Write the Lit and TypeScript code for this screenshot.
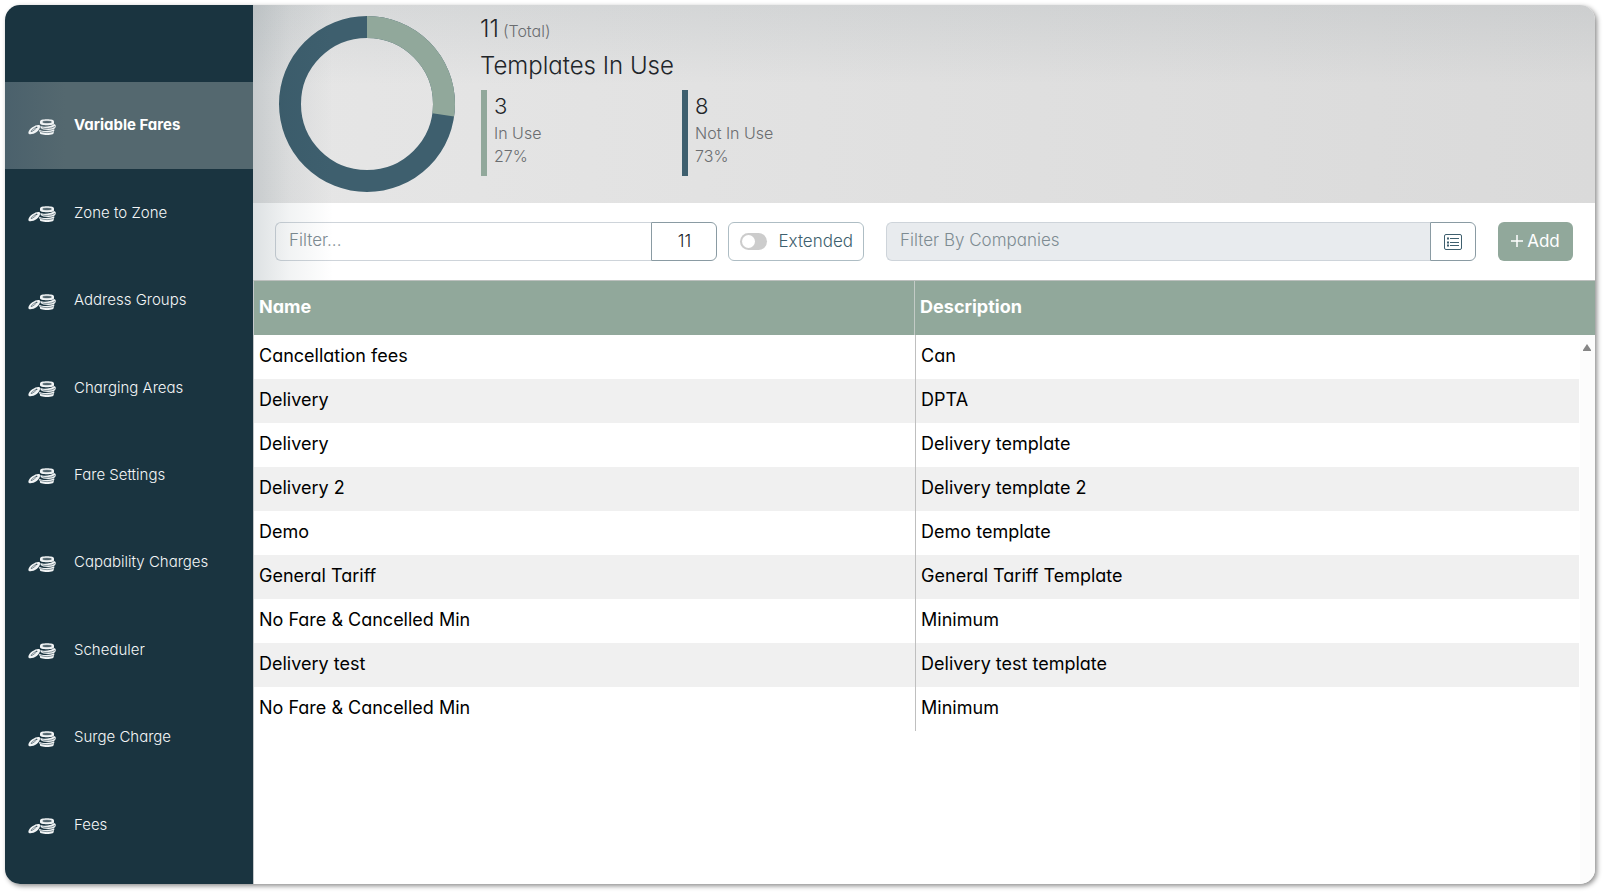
import { LitElement, html, css, svg } from "lit";
import { customElement, property, state } from "lit/decorators.js";
import { classMap } from "lit/directives/class-map.js";

const coinsIcon = html`
  <svg width="28" height="20" viewBox="0 0 84 60" aria-hidden="true" fill="none">
    <g fill="#f1f4f5">
      <path d="M36 14c0-5 8-7 21-7s21 2 21 7v5c0 4-8 6-21 6s-21-2-21-6z" />
      <path d="M37 27c7 3 31 4 41-6 5 1 6 5 5 9-1 6-9 9-22 9-12 0-20-2-23-6z" />
      <path d="M34 38c6 5 32 6 44-1 2 2 1 6-1 8 1 3 0 5-3 7-9 3-25 3-34 0-4-1-5-3-4-6-2-2-3-5-2-8z" />
      <path d="M2 50c-3-3 2-13 11-19 9-7 19-9 22-6 4 4-1 14-9 20-9 6-20 9-24 5z" />
    </g>
    <g stroke="#1a3440" stroke-width="1.500" stroke-linecap="round">
      <ellipse cx="57" cy="15" rx="13" ry="3" fill="#5d7078" stroke-width="1" />
      <path d="M44 33c9 3 26 2 36-4M38 44c10 4 29 4 37 0" />
      <ellipse cx="18" cy="37" rx="11" ry="2" transform="rotate(-37 18 37)" />
    </g>
  </svg>
`;

const listIcon = html`
  <svg width="20" height="18" viewBox="0 0 20 18" fill="none" stroke="#3e5f6e" aria-hidden="true">
    <rect x="1.500" y="1.500" width="17" height="15" rx="1.500" />
    <path d="M7 5.500h9M7 9.500h9M7 12.500h9" />
    <path d="M4 5.500h2M4 9.500h2M4 12.500h2" stroke-width="2" />
  </svg>
`;

const plusIcon = html`
  <svg width="12" height="14" viewBox="0 0 12 14" fill="none" stroke="#fff" stroke-width="1.500" aria-hidden="true">
    <path d="M6 1v12M0 7h12" />
  </svg>
`;

const menu = [
  "Variable Fares",
  "Zone to Zone",
  "Address Groups",
  "Charging Areas",
  "Fare Settings",
  "Capability Charges",
  "Scheduler",
  "Surge Charge",
  "Fees",
];

const templates = [
  { name: "Cancellation fees", description: "Can" },
  { name: "Delivery", description: "DPTA" },
  { name: "Delivery", description: "Delivery template" },
  { name: "Delivery 2", description: "Delivery template 2" },
  { name: "Demo", description: "Demo template" },
  { name: "General Tariff", description: "General Tariff Template" },
  { name: "No Fare & Cancelled Min", description: "Minimum" },
  { name: "Delivery test", description: "Delivery test template" },
  { name: "No Fare & Cancelled Min", description: "Minimum" },
];

@customElement("side-menu")
class SideMenu extends LitElement {
  @state() private active = 0;

  static styles = css`
    :host {
      display: flex;
      flex: 0 0 248px;
      background: #1a3440;
    }
    .menu {
      display: flex;
      flex: 1;
      flex-direction: column;
      padding: 77px 0 15px;
    }
    .item {
      display: flex;
      flex: 1;
      align-items: center;
      gap: 18px;
      padding: 0 23px;
      color: #f4f6f7;
      font-size: 15px;
      font-weight: 300;
      line-height: 20px;
      text-decoration: none;
    }
    .active {
      background: linear-gradient(to right, #4b616c, #54686f 60px);
      color: #fff;
      font-weight: 700;
    }
    svg {
      margin-top: 2px;
    }
    .label {
      padding-bottom: 1px;
    }
  `;

  render() {
    return html`
      <nav class="menu">
        ${menu.map(
          (label, i) => html`
            <a
              href="#"
              class=${classMap({ item: true, active: i === this.active })}
              @click=${(e: Event) => {
                e.preventDefault();
                this.active = i;
              }}
              >${coinsIcon}<span class="label">${label}</span></a
            >
          `,
        )}
      </nav>
    `;
  }
}

@customElement("usage-summary")
class UsageSummary extends LitElement {
  @property({ type: Number }) used = 0;
  @property({ type: Number }) unused = 0;

  static styles = css`
    :host {
      display: flex;
      gap: 25px;
      padding: 5px 26px 11px;
      background:
        linear-gradient(to bottom, rgba(26, 52, 64, 0.07), transparent 80px),
        linear-gradient(to right, #e6e6e6, #dadada);
    }
    .donut {
      display: block;
      margin-top: 6px;
    }
    .line {
      margin: 0;
      color: #212529;
      font-size: 24px;
      font-weight: 300;
      line-height: 37px;
    }
    small,
    .muted {
      color: #6a6d70;
      font-size: 16px;
      font-weight: 300;
      line-height: 23px;
    }
    small {
      margin-left: 4px;
    }
    .stats {
      display: flex;
      margin: 6px 0 0 1px;
    }
    .stat {
      box-sizing: border-box;
      width: 201px;
      padding: 0 0 8px 7px;
      border-left: 6px solid #91a89b;
    }
    .unused {
      border-color: #3e5f6e;
    }
    .count {
      color: #212529;
      font-size: 22px;
      font-weight: 300;
      line-height: 32px;
    }
  `;

  render() {
    const total = this.used + this.unused;
    const share = total ? (this.used / total) * 100 : 0;
    const stat = (kind: string, count: number, label: string, pct: number) => html`
      <div class="stat ${kind}">
        <div class="count">${count}</div>
        <div class="muted">${label}</div>
        <div class="muted">${Math.round(pct)}%</div>
      </div>
    `;
    return html`
      <svg class="donut" width="176" height="176" viewBox="0 0 176 176" fill="none" stroke-width="22">
        ${svg`
          <circle cx="88" cy="88" r="77" stroke="#3e5f6e" />
          <circle cx="88" cy="88" r="77" stroke="#91a89b" pathLength="100"
            stroke-dasharray="${share} 100" transform="rotate(-90 88 88)" />
        `}
      </svg>
      <div>
        <p class="line">${total}<small>(Total)</small></p>
        <h1 class="line">Templates In Use</h1>
        <div class="stats">
          ${stat("used", this.used, "In Use", share)}
          ${stat("unused", this.unused, "Not In Use", 100 - share)}
        </div>
      </div>
    `;
  }
}

@customElement("filter-bar")
class FilterBar extends LitElement {
  @property({ type: Number }) count = 0;

  static styles = css`
    :host {
      display: flex;
      gap: 22px;
      padding: 19px 22px;
    }
    input,
    button,
    .count,
    .switch {
      box-sizing: border-box;
      height: 39px;
      margin: 0;
      border: 1px solid #ced4da;
      font: inherit;
      font-size: 17px;
      font-weight: 300;
    }
    .text {
      flex: 1;
      min-width: 0;
      padding: 0 13px 3px;
      border-right: 0;
      border-radius: 6px 0 0 6px;
      background: transparent;
      color: #212529;
    }
    .companies .text {
      background: #e8ebee;
    }
    .text::placeholder {
      color: #7e8b92;
      opacity: 1;
    }
    .filters {
      display: flex;
      flex: 3;
    }
    .companies {
      display: flex;
      flex: 4;
    }
    .count,
    .pick {
      display: flex;
      align-items: center;
      justify-content: center;
      border-color: #8a9ba3;
      border-radius: 0 6px 6px 0;
      background: #fff;
      color: #212529;
    }
    .count {
      width: 66px;
      padding-bottom: 2px;
    }
    .pick {
      width: 46px;
      padding: 0;
    }
    .switch {
      display: flex;
      align-items: center;
      gap: 11px;
      margin-left: -11px;
      padding: 0 10px 0 11px;
      border-color: #aebdc4;
      border-radius: 6px;
      color: #3e5f6e;
    }
    .caption {
      padding-bottom: 2px;
    }
    .switch input {
      display: flex;
      align-items: center;
      width: 27px;
      height: 17px;
      padding: 0 2px;
      border: 0;
      border-radius: 9px;
      background: #ccc;
      appearance: none;
    }
    .switch input::before {
      width: 13px;
      height: 13px;
      border-radius: 50%;
      background: #fff;
      content: "";
    }
    .switch input:checked {
      justify-content: flex-end;
      background: #91a89b;
    }
    .add {
      display: flex;
      align-items: center;
      justify-content: center;
      gap: 4px;
      width: 75px;
      padding: 0 0 2px;
      border: 0;
      border-radius: 6px;
      background: #91a89b;
      color: #fff;
      font-weight: 400;
    }
  `;

  render() {
    return html`
      <div class="filters">
        <input class="text" type="text" placeholder="Filter..." aria-label="Filter" />
        <output class="count">${this.count}</output>
      </div>
      <label class="switch"><input type="checkbox" /><span class="caption">Extended</span></label>
      <div class="companies">
        <input class="text" type="text" readonly placeholder="Filter By Companies" aria-label="Filter By Companies" />
        <button class="pick" type="button" aria-label="Choose companies">${listIcon}</button>
      </div>
      <button class="add" type="button">${plusIcon}Add</button>
    `;
  }
}

@customElement("template-table")
class TemplateTable extends LitElement {
  static styles = css`
    :host {
      display: block;
      flex: 1;
      border-top: 1px solid #bcc0be;
      border-left: 1px solid #c4c8ca;
      background: linear-gradient(to left, #fcfcfc 15px, #fff 15px);
    }
    table {
      width: 100%;
      border-collapse: separate;
      border-spacing: 0;
      table-layout: fixed;
      color: #000;
      font-size: 18px;
      line-height: 24px;
    }
    .name {
      width: 49.3%;
    }
    .gutter {
      width: 16px;
    }
    th,
    td {
      box-sizing: border-box;
      padding: 0 5px 2px;
      text-align: left;
    }
    th {
      height: 54px;
      background: #91a89b;
      color: #fff;
      font-weight: 700;
    }
    th:first-child {
      border-right: 1px solid #c3cbc6;
    }
    td {
      height: 44px;
    }
    td + td {
      border-left: 1px solid #bfbfbf;
    }
    tr:nth-child(even) td {
      background: #f0f0f0;
    }
    tr td.rail {
      padding: 0 4px 20px;
      border: 0;
      background: transparent;
      line-height: 0;
    }
  `;

  render() {
    return html`
      <table>
        <colgroup>
          <col class="name" />
          <col />
          <col class="gutter" />
        </colgroup>
        <thead>
          <tr>
            <th scope="col">Name</th>
            <th scope="col" colspan="2">Description</th>
          </tr>
        </thead>
        <tbody>
          ${templates.map(
            (row, i) => html`
              <tr>
                <td>${row.name}</td>
                <td>${row.description}</td>
                <td class="rail">
                  ${i === 0
                    ? html`<svg width="8" height="7" viewBox="0 0 8 7" aria-hidden="true">
                        <path d="M4 0l4 6v1H0V6z" fill="#858585" />
                      </svg>`
                    : ""}
                </td>
              </tr>
            `,
          )}
        </tbody>
      </table>
    `;
  }
}

@customElement("app-root")
class AppRoot extends LitElement {
  static styles = css`
    :host {
      display: flex;
      box-sizing: border-box;
      min-height: 100vh;
      padding: 5px 10px 10px 5px;
      background: #fff;
      font-family: Inter, "Open Sans", sans-serif;
      font-feature-settings: "cv11";
    }
    .card {
      display: flex;
      flex: 1;
      overflow: hidden;
      border-radius: 15px;
      background: #fff;
      box-shadow: 2px 2px 5px rgba(0, 0, 0, 0.45);
    }
    .main {
      display: flex;
      flex: 1;
      flex-direction: column;
      min-width: 0;
    }
    .top {
      position: relative;
    }
    /* Shade cast by the side menu over the summary and the filters */
    .top::after {
      position: absolute;
      inset: 0 auto 0 0;
      width: 80px;
      background: linear-gradient(to right, rgba(26, 52, 64, 0.15), rgba(26, 52, 64, 0.06) 45%, transparent);
      content: "";
      pointer-events: none;
    }
  `;

  render() {
    return html`
      <div class="card">
        <side-menu></side-menu>
        <main class="main">
          <div class="top">
            <usage-summary .used=${3} .unused=${8}></usage-summary>
            <filter-bar .count=${11}></filter-bar>
          </div>
          <template-table></template-table>
        </main>
      </div>
    `;
  }
}
